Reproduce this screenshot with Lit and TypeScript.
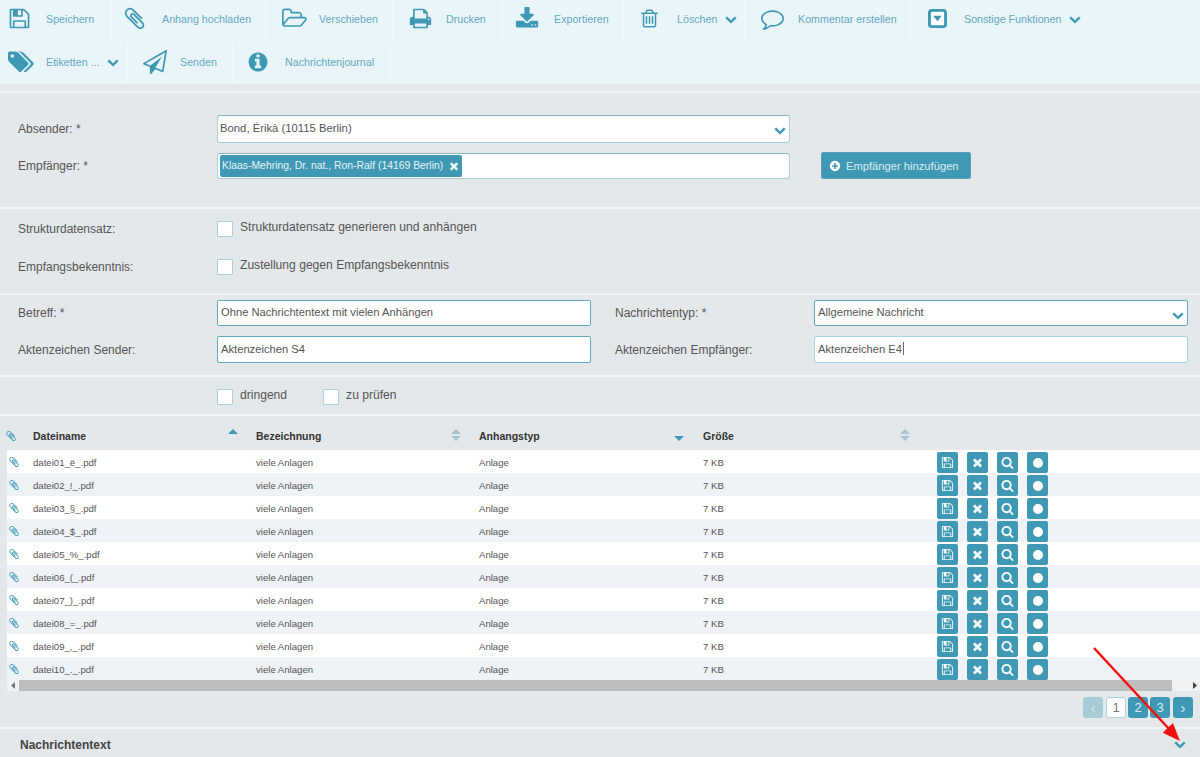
import { LitElement, html, css, svg, TemplateResult } from 'lit';
import { customElement } from 'lit/decorators.js';

// FontAwesome 4 style glyphs, 1792 grid
const P = {
    save: 'M512 1536h768v-384h-768v384zm896 0h128v-896q0-14-10-38.500t-20-34.500l-281-281q-10-10-34-20t-39-10v416q0 40-28 68t-68 28h-576q-40 0-68-28t-28-68v-416h-128v1280h128v-416q0-40 28-68t68-28h832q40 0 68 28t28 68v416zm-384-928v-320q0-13-9.500-22.500t-22.500-9.500h-192q-13 0-22.500 9.500t-9.500 22.500v320q0 13 9.500 22.500t22.500 9.500h192q13 0 22.500-9.500t9.500-22.500zm640 32v928q0 40-28 68t-68 28h-1344q-40 0-68-28t-28-68v-1344q0-40 28-68t68-28h928q40 0 88 20t76 48l280 280q28 28 48 76t20 88z',
    clip: 'M1596 1385q0 117-79 196t-196 79q-135 0-235-100l-777-776q-113-115-113-271 0-159 110-270t269-111q158 0 273 113l605 606q10 10 10 22 0 16-30.500 46.500t-46.500 30.500q-13 0-23-10l-606-607q-79-77-181-77-106 0-179 75t-73 181q0 105 76 181l776 777q63 63 145 63 64 0 106-42t42-106q0-82-63-145l-581-581q-26-24-60-24-29 0-48 19t-19 48q0 32 25 59l410 410q10 10 10 22 0 16-31 47t-47 31q-12 0-22-10l-410-410q-63-61-63-149 0-82 57-139t139-57q88 0 149 63l581 581q100 98 100 235z',
    folder: 'M1781 931q0-35-53-35h-1088q-40 0-85.500 21.500t-71.500 52.500l-294 363q-18 24-18 40 0 35 53 35h1088q40 0 86-22t71-53l294-363q18-22 18-39zm-1141-163h768v-160q0-40-28-68t-68-28h-576q-40 0-68-28t-28-68v-64q0-40-28-68t-68-28h-320q-40 0-68 28t-28 68v853l256-315q44-53 116-87.500t140-34.500zm1269 163q0 62-46 120l-295 363q-43 53-116 87.500t-140 34.500h-1088q-92 0-158-66t-66-158v-960q0-92 66-158t158-66h320q92 0 158 66t66 158v32h544q92 0 158 66t66 158v160h192q54 0 99 24.500t67 70.500q15 32 15 68z',
    print: 'M448 1536h896v-256h-896v256zm0-640h896v-384h-160q-40 0-68-28t-28-68v-160h-640v640zm1152 64q0-26-19-45t-45-19-45 19-19 45 19 45 45 19 45-19 19-45zm128 0v416q0 13-9.500 22.500t-22.500 9.500h-224v160q0 40-28 68t-68 28h-960q-40 0-68-28t-28-68v-160h-224q-13 0-22.500-9.500t-9.500-22.500v-416q0-79 56.500-135.500t135.500-56.500h64v-544q0-40 28-68t68-28h672q40 0 88 20t76 48l152 152q28 28 48 76t20 88v256h64q79 0 135.500 56.500t56.500 135.500z',
    download: 'M1344 1344q0-26-19-45t-45-19-45 19-19 45 19 45 45 19 45-19 19-45zm256 0q0-26-19-45t-45-19-45 19-19 45 19 45 45 19 45-19 19-45zm128-224v320q0 40-28 68t-68 28h-1472q-40 0-68-28t-28-68v-320q0-40 28-68t68-28h465l135 136q58 56 136 56t136-56l136-136h464q40 0 68 28t28 68zm-325-569q17 41-14 70l-448 448q-18 19-45 19t-45-19l-448-448q-31-29-14-70 17-39 59-39h256v-448q0-26 19-45t45-19h256q26 0 45 19t19 45v448h256q42 0 59 39z',
    trash: 'M704 736v576q0 14-9 23t-23 9h-64q-14 0-23-9t-9-23v-576q0-14 9-23t23-9h64q14 0 23 9t9 23zm256 0v576q0 14-9 23t-23 9h-64q-14 0-23-9t-9-23v-576q0-14 9-23t23-9h64q14 0 23 9t9 23zm256 0v576q0 14-9 23t-23 9h-64q-14 0-23-9t-9-23v-576q0-14 9-23t23-9h64q14 0 23 9t9 23zm128 724v-948h-896v948q0 22 7 40.500t14.500 27 10.500 8.500h832q3 0 10.500-8.500t14.500-27 7-40.500zm-672-1076h448l-48-117q-7-9-17-11h-317q-10 2-17 11zm928 32v64q0 14-9 23t-23 9h-96v948q0 83-47 143.500t-113 60.500h-832q-66 0-113-58.500t-47-141.500v-952h-96q-14 0-23-9t-9-23v-64q0-14 9-23t23-9h309l70-167q15-37 54-63t79-26h320q40 0 79 26t54 63l70 167h309q14 0 23 9t9 23z',
    comment: 'M896 384q-204 0-381.500 69.500t-282 187.500-104.500 255q0 112 71.500 213.500t201.500 175.500l87 50-27 96q-24 91-70 172 152-63 275-171l43-38 57 6q69 8 130 8 204 0 381.500-69.500t282-187.500 104.500-255-104.500-255-282-187.500-381.500-69.500zm896 512q0 174-120 321.500t-326 233-450 85.500q-70 0-145-8-198 175-460 242-49 14-114 22h-5q-15 0-27-10.500t-16-27.500v-1q-3-4-.5-12t2-10 4.500-9.500l6-9 7-8.500 8-9q7-8 31-34.500t34.500-38 31-39.500 32.500-51 27-59 26-76q-157-89-247.500-220t-90.500-281q0-174 120-321.500t326-233 450-85.500 450 85.500 326 233 120 321.500z',
    tags: 'M448 448q0-53-37.500-90.500t-90.500-37.500-90.500 37.500-37.500 90.500 37.500 90.500 90.500 37.500 90.500-37.500 37.500-90.500zm1067 576q0 53-37 90l-491 492q-39 37-91 37-53 0-90-37l-715-716q-38-37-64.500-101t-26.500-117v-416q0-52 38-90t90-38h416q53 0 117 26.500t102 64.500l715 714q37 39 37 91zm384 0q0 53-37 90l-491 492q-39 37-91 37-36 0-59-14t-53-45l470-470q37-37 37-90 0-52-37-91l-715-714q-38-38-102-64.500t-117-26.500h224q53 0 117 26.500t102 64.500l715 714q37 39 37 91z',
    plane: 'M1764 11q33 24 27 64l-256 1536q-5 29-32 45-14 8-31 8-11 0-24-5l-527-215-298 327q-18 21-47 21-14 0-23-4-19-7-30-23.500t-11-36.500v-452l-472-193q-37-14-40-55-3-39 32-59l1664-960q35-21 68 2zm-342 1499l221-1323-1434 827 336 137 863-639-478 797z',
    info: 'M1152 1376v-160q0-14-9-23t-23-9h-96v-512q0-14-9-23t-23-9h-320q-14 0-23 9t-9 23v160q0 14 9 23t23 9h96v320h-96q-14 0-23 9t-9 23v160q0 14 9 23t23 9h448q14 0 23-9t9-23zm-128-896v-160q0-14-9-23t-23-9h-192q-14 0-23 9t-9 23v160q0 14 9 23t23 9h192q14 0 23-9t9-23zm640 416q0 209-103 385.500t-279.500 279.500-385.500 103-385.500-103-279.500-279.500-103-385.500 103-385.500 279.500-279.500 385.500-103 385.500 103 279.500 279.500 103 385.500z',
    chevron: 'M1683 808l-742 741q-19 19-45 19t-45-19l-742-741q-19-19-19-45.500t19-45.500l166-165q19-19 45-19t45 19l531 531 531-531q19-19 45-19t45 19l166 165q19 19 19 45.500t-19 45.500z',
    times: 'M1490 1322q0 40-28 68l-136 136q-28 28-68 28t-68-28l-294-294-294 294q-28 28-68 28t-68-28l-136-136q-28-28-28-68t28-68l294-294-294-294q-28-28-28-68t28-68l136-136q28-28 68-28t68 28l294 294 294-294q28-28 68-28t68 28l136 136q28 28 28 68t-28 68l-294 294 294 294q28 28 28 68z',
    search: 'M1216 832q0-185-131.500-316.500t-316.500-131.500-316.500 131.500-131.500 316.500 131.500 316.500 316.500 131.500 316.500-131.500 131.500-316.500zm512 832q0 52-38 90t-90 38q-54 0-90-38l-343-342q-179 124-399 124-143 0-273.500-55.500t-225-150-150-225-55.500-273.500 55.500-273.500 150-225 225-150 273.500-55.500 273.500 55.500 225 150 150 225 55.500 273.500q0 220-124 399l343 343q37 37 37 90z',
    plus: 'M1344 960v-128q0-26-19-45t-45-19h-256v-256q0-26-19-45t-45-19h-128q-26 0-45 19t-19 45v256h-256q-26 0-45 19t-19 45v128q0 26 19 45t45 19h256v256q0 26 19 45t45 19h128q26 0 45-19t19-45v-256h256q26 0 45-19t19-45zm320-64q0 209-103 385.500t-279.500 279.500-385.500 103-385.500-103-279.500-279.500-103-385.500 103-385.500 279.500-279.500 385.500-103 385.500 103 279.500 279.500 103 385.500z',
};

function fa(name: keyof typeof P, size: number, vb = '0 0 1792 1792'): TemplateResult {
    return html`<svg width=${size} height=${size} viewBox=${vb} fill="currentColor"><path d=${P[name]}></path></svg>`;
}

const caretBox = html`<svg width="19" height="19" viewBox="0 0 20 20">
    <rect x="1.5" y="1.500" width="17" height="17" rx="2.500" fill="#fff" stroke="currentColor" stroke-width="3"></rect>
    <path d="M5.500 7h9L10 13z" fill="currentColor"></path>
</svg>`;

const chevron = html`<span class="chev">${fa('chevron', 12)}</span>`;

interface Tool { label: string; icon: TemplateResult; w: number; ic: number; tx: number; menu?: boolean; }

const row1: Tool[] = [
    { label: 'Speichern', icon: fa('save', 23), w: 112, ic: 19, tx: 46 },
    { label: 'Anhang hochladen', icon: fa('clip', 25), w: 155, ic: 22, tx: 50 },
    { label: 'Verschieben', icon: fa('folder', 25, '0 0 1920 1792'), w: 126, ic: 27, tx: 52 },
    { label: 'Drucken', icon: fa('print', 23), w: 109, ic: 27, tx: 53 },
    { label: 'Exportieren', icon: fa('download', 24), w: 122, ic: 25, tx: 52 },
    { label: 'Löschen', icon: fa('trash', 21), w: 121, ic: 25, tx: 53, menu: true },
    { label: 'Kommentar erstellen', icon: fa('comment', 23), w: 165, ic: 27, tx: 53 },
    { label: 'Sonstige Funktionen', icon: caretBox, w: 180, ic: 27, tx: 54, menu: true },
];
const row2: Tool[] = [
    { label: 'Etiketten ...', icon: fa('tags', 26, '0 0 1920 1792'), w: 128, ic: 21, tx: 46, menu: true },
    { label: 'Senden', icon: fa('plane', 24), w: 105, ic: 27, tx: 52 },
    { label: 'Nachrichtenjournal', icon: fa('info', 22), w: 157, ic: 25, tx: 52 },
];

const files = ['datei01_ë_.pdf', 'datei02_!_.pdf', 'datei03_§_.pdf', 'datei04_$_.pdf', 'datei05_%_.pdf',
    'datei06_(_.pdf', 'datei07_)_.pdf', 'datei08_=_.pdf', 'datei09_,_.pdf', 'datei10_._.pdf'];

@customElement('app-root')
export class AppRoot extends LitElement {

    static styles = css`
        :host {
            display: block;
            position: relative;
            width: 1200px;
            height: 757px;
            overflow: hidden;
            background: #e4e8eb;
            font-family: "Liberation Sans", Arial, sans-serif;
            color: #555;
        }

        .toolbar {
            height: 84px;
            background: #eaf5f9;
            color: #3f99b5;
        }

        .tool-row {
            display: flex;
            height: 41px;
        }

        .tool {
            box-sizing: border-box;
            display: flex;
            align-items: center;
            border-right: 1px solid #f0f8fb;
            font-size: 10.7px;
            color: #64a9c1;
        }

        .first .tool {
            padding-bottom: 4px;
        }

        .tool-icon {
            width: 28px;
            height: 30px;
            flex: none;
            display: flex;
            align-items: center;
            justify-content: center;
            color: #3f99b5;
        }

        .chev {
            display: inline-flex;
            color: #3f99b5;
            margin-left: 8px;
        }

        .section {
            box-sizing: border-box;
            border-bottom: 2px solid #f1f3f5;
            padding-left: 18px;
        }

        .gap-top {
            height: 9px;
            padding: 0;
        }

        .senders {
            height: 116px;
            padding-top: 22px;
        }

        .options {
            height: 86px;
            padding-top: 9px;
        }

        .subject {
            height: 82px;
            padding-top: 5px;
        }

        .flags {
            height: 39px;
            padding-top: 11px;
        }

        .row {
            display: grid;
            grid-template-columns: 199px 573px auto;
            align-items: center;
        }

        .row + .row {
            margin-top: 9px;
        }

        .options .row {
            height: 22px;
        }

        .options .row + .row {
            margin-top: 16px;
        }

        .options .label {
            margin-bottom: 1px;
        }

        .label {
            font-size: 12px;
            color: #555;
        }

        .field {
            box-sizing: border-box;
            position: relative;
            height: 28px;
            background: #fff;
            border: 1px solid #a9cfdb;
            border-top-color: #86b3c2;
            border-radius: 3px;
            font-size: 11.3px;
            color: #555;
            display: flex;
            align-items: center;
            padding: 0 2px 2px;
        }

        .field .chev {
            position: absolute;
            right: 3px;
            top: 8px;
        }

        .chips {
            height: 26px;
            padding: 2px;
        }

        .chip {
            height: 22px;
            box-sizing: border-box;
            background: #3f99b5;
            color: #e8f4f8;
            border-radius: 2px;
            display: flex;
            align-items: center;
            gap: 5px;
            padding: 0 2px 0 2px;
            font-size: 10.4px;
        }

        .chip svg {
            display: block;
        }

        .add {
            box-sizing: border-box;
            margin-left: 31px;
            width: 150px;
            height: 27px;
            background: #3f99b5;
            border-radius: 2px;
            border: 1px solid #5ba1b7;
            color: #dcecf2;
            font-size: 11.2px;
            display: flex;
            align-items: center;
            gap: 5px;
            padding-left: 7px;
        }

        .add svg {
            color: #fff;
        }

        .check {
            display: flex;
            align-items: center;
            font-size: 12.1px;
            color: #555;
        }

        .box {
            box-sizing: border-box;
            width: 16px;
            height: 16px;
            background: #fff;
            border: 1px solid #a9cfdb;
            border-radius: 1px;
            margin-right: 7px;
            flex: none;
        }

        .check-text {
            margin-bottom: 4px;
        }

        .subject-grid {
            display: grid;
            grid-template-columns: 199px 374px 24px 199px 374px;
            grid-template-rows: 26px 27px;
            row-gap: 10px;
            align-items: center;
        }

        .subject-grid .field {
            height: 100%;
            padding: 0 3px 2px;
            border-color: #63a9c0;
            border-radius: 2px;
            font-size: 11.2px;
        }

        .subject-grid .field.focused {
            border-color: #a4d3ea;
        }

        .caret {
            display: inline-block;
            width: 1px;
            height: 13px;
            background: #666;
            margin-left: 1px;
        }

        .flag-row {
            display: flex;
            margin-left: 199px;
            gap: 36px;
        }

        .table {
            margin-left: 7px;
        }

        .tr {
            display: grid;
            grid-template-columns: 26px 223px 223px 224px 234px auto;
            align-items: center;
        }

        .head {
            height: 34px;
            font-size: 10.5px;
            font-weight: bold;
            color: #333;
        }

        .th {
            display: flex;
            align-items: center;
            justify-content: space-between;
            padding-right: 18px;
            padding-top: 5px;
        }

        .th.type {
            padding-right: 19px;
        }

        .th.size {
            padding-right: 27px;
        }

        .sort {
            display: flex;
            flex-direction: column;
            gap: 2px;
            margin-top: -2px;
        }

        .tri {
            display: block;
        }

        .row-cell {
            height: 23px;
            font-size: 9.6px;
            color: #555;
            background: #fff;
        }

        .row-cell > span:not(.actions):not(.attach) {
            padding-top: 2px;
        }

        .row-cell:nth-child(odd) {
            background: #eff3f8;
        }

        .attach {
            display: flex;
            padding-left: 1px;
            color: #3f99b5;
        }

        .head .attach {
            padding-left: 0;
            padding-top: 6px;
            margin-left: -2px;
        }

        .actions {
            display: flex;
            gap: 9px;
            padding-top: 2px;
        }

        .act {
            width: 21px;
            height: 21px;
            background: #3f99b5;
            border-radius: 2px;
            color: #f2f8fa;
            display: flex;
            align-items: center;
            justify-content: center;
        }

        .act i {
            display: block;
            width: 10px;
            height: 10px;
            border-radius: 50%;
            background: #fff;
        }

        .scroll {
            display: flex;
            align-items: center;
            height: 11px;
            background: #f1f1f1;
            color: #555;
            padding-right: 3px;
        }

        .scroll-left {
            width: 12px;
            display: flex;
            justify-content: center;
            color: #777;
        }

        .thumb {
            flex: none;
            width: 1153px;
            height: 11px;
            background: #bdbdbd;
        }

        .scroll-right {
            color: #444;
            display: flex;
            margin-left: auto;
        }

        .pager {
            display: flex;
            justify-content: flex-end;
            gap: 2px;
            padding: 6px 7px 0 0;
            height: 38px;
            box-sizing: border-box;
            border-bottom: 2px solid #f1f3f5;
        }

        .pg {
            width: 20px;
            height: 21px;
            border-radius: 3px;
            background: #3f99b5;
            color: #dcecf2;
            font-size: 13px;
            display: flex;
            align-items: center;
            justify-content: center;
        }

        .pg.off {
            background: #a8cbd8;
            color: #d2e3ea;
            margin-right: 1px;
        }

        .pg.cur {
            background: #fff;
            box-sizing: border-box;
            border: 1px solid #a9cfdb;
            color: #777;
        }

        .pg.next {
            margin-left: 1px;
        }

        .pg.off, .pg.next {
            font-size: 15px;
        }

        .foot {
            box-sizing: border-box;
            display: flex;
            justify-content: space-between;
            align-items: center;
            height: 27px;
            padding: 5px 14px 0 20px;
            font-size: 12px;
            font-weight: bold;
            color: #444;
        }

        .foot .chev {
            margin: -2px 0 0;
        }

        .arrow {
            position: absolute;
            left: 0;
            top: 0;
            pointer-events: none;
        }
    `;

    private tool(t: Tool): TemplateResult {
        const pad = t.ic - 14;
        const gap = t.tx - t.ic - 14;
        return html`<div class="tool" style="width:${t.w}px;padding-left:${pad}px">
            <span class="tool-icon" style="margin-right:${gap}px">${t.icon}</span>
            <span>${t.label}</span>
            ${t.menu ? chevron : ''}
        </div>`;
    }

    private sort(dir: 'up' | 'down' | 'both'): TemplateResult {
        const up = dir === 'down' ? 'transparent' : dir === 'up' ? '#3f99b5' : '#a8c5d1';
        const down = dir === 'up' ? 'transparent' : dir === 'down' ? '#3f99b5' : '#a8c5d1';
        return html`<span class="sort">
            <svg class="tri" width="10" height="5" viewBox="0 0 10 5"><path d="M0 5L5 0l5 5z" fill=${up}></path></svg>
            <svg class="tri" width="10" height="5" viewBox="0 0 10 5"><path d="M0 0l5 5 5-5z" fill=${down}></path></svg>
        </span>`;
    }

    private fileRow(name: string): TemplateResult {
        return html`<div class="tr row-cell">
            <span class="attach">${fa('clip', 12)}</span>
            <span>${name}</span>
            <span>viele Anlagen</span>
            <span>Anlage</span>
            <span>7 KB</span>
            <span class="actions">
                <span class="act">${fa('save', 13)}</span>
                <span class="act">${fa('times', 13)}</span>
                <span class="act">${fa('search', 13)}</span>
                <span class="act"><i></i></span>
            </span>
        </div>`;
    }

    render(): TemplateResult {
        return html`
            <div class="toolbar">
                <div class="tool-row first">${row1.map(t => this.tool(t))}</div>
                <div class="tool-row">${row2.map(t => this.tool(t))}</div>
            </div>

            <div class="section gap-top"></div>

            <div class="section senders">
                <div class="row">
                    <span class="label">Absender: *</span>
                    <div class="field">Bond, Érikà (10115 Berlin)<span class="chev">${fa('chevron', 12)}</span></div>
                </div>
                <div class="row">
                    <span class="label">Empfänger: *</span>
                    <div class="field chips">
                        <span class="chip">Klaas-Mehring, Dr. nat., Ron-Ralf (14169 Berlin)${fa('times', 12)}</span>
                    </div>
                    <div class="add">${fa('plus', 12)}<span>Empfänger hinzufügen</span></div>
                </div>
            </div>

            <div class="section options">
                <div class="row">
                    <span class="label">Strukturdatensatz:</span>
                    <label class="check"><span class="box"></span><span class="check-text">Strukturdatensatz generieren und anhängen</span></label>
                </div>
                <div class="row">
                    <span class="label">Empfangsbekenntnis:</span>
                    <label class="check"><span class="box"></span><span class="check-text">Zustellung gegen Empfangsbekenntnis</span></label>
                </div>
            </div>

            <div class="section subject">
                <div class="subject-grid">
                    <span class="label">Betreff: *</span>
                    <div class="field">Ohne Nachrichtentext mit vielen Anhängen</div>
                    <span></span>
                    <span class="label">Nachrichtentyp: *</span>
                    <div class="field">Allgemeine Nachricht<span class="chev">${fa('chevron', 12)}</span></div>
                    <span class="label">Aktenzeichen Sender:</span>
                    <div class="field">Aktenzeichen S4</div>
                    <span></span>
                    <span class="label">Aktenzeichen Empfänger:</span>
                    <div class="field focused">Aktenzeichen E4<span class="caret"></span></div>
                </div>
            </div>

            <div class="section flags">
                <div class="flag-row">
                    <label class="check"><span class="box"></span><span class="check-text">dringend</span></label>
                    <label class="check"><span class="box"></span><span class="check-text">zu prüfen</span></label>
                </div>
            </div>

            <div class="table">
                <div class="tr head">
                    <span class="attach">${fa('clip', 12)}</span>
                    <span class="th">Dateiname ${this.sort('up')}</span>
                    <span class="th">Bezeichnung ${this.sort('both')}</span>
                    <span class="th type">Anhangstyp ${this.sort('down')}</span>
                    <span class="th size">Größe ${this.sort('both')}</span>
                    <span></span>
                </div>
                ${files.map(f => this.fileRow(f))}
                <div class="scroll">
                    <span class="scroll-left"><svg width="4" height="7" viewBox="0 0 4 7"><path d="M4 0v7L0 3.500z" fill="currentColor"></path></svg></span>
                    <span class="thumb"></span>
                    <span class="scroll-right"><svg width="4" height="7" viewBox="0 0 4 7"><path d="M0 0v7l4-3.500z" fill="currentColor"></path></svg></span>
                </div>
            </div>

            <div class="pager">
                <span class="pg off">‹</span>
                <span class="pg cur">1</span>
                <span class="pg">2</span>
                <span class="pg">3</span>
                <span class="pg next">›</span>
            </div>

            <div class="foot">
                <span>Nachrichtentext</span>
                <span class="chev">${fa('chevron', 12)}</span>
            </div>

            <svg class="arrow" width="1200" height="757" viewBox="0 0 1200 757">
                ${svg`<line x1="1094" y1="648" x2="1170" y2="730" stroke="#f5100f" stroke-width="2.500"></line>
                <path d="M1180 741l-17.300-8.300 10.200-9.600z" fill="#f5100f"></path>`}
            </svg>
        `;
    }
}

declare global {
    interface HTMLElementTagNameMap {
        "app-root": AppRoot;
    }
}
